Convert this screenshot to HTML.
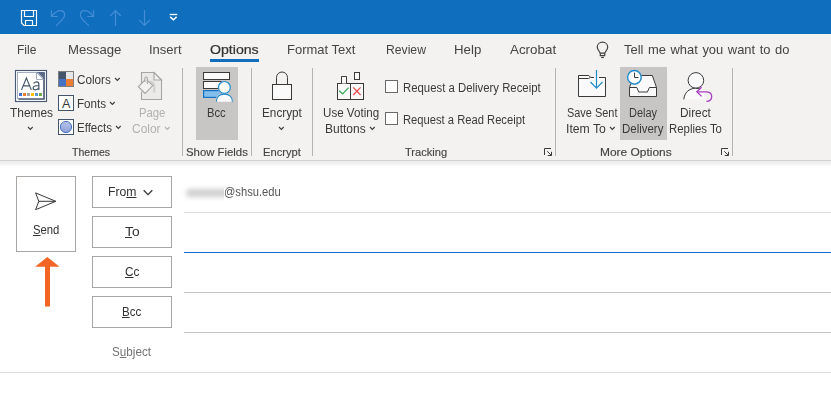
<!DOCTYPE html>
<html lang="en">
<head>
<meta charset="utf-8">
<title>Untitled - Message (HTML)</title>
<style>
  html, body { margin: 0; padding: 0; }
  body {
    width: 831px; height: 415px; overflow: hidden; position: relative;
    background: #ffffff;
    font-family: "Liberation Sans", sans-serif;
  }
  .a { position: absolute; display: block; overflow: visible; }
  .t {
    position: absolute; white-space: nowrap; transform-origin: 0 0;
    font-family: "Liberation Sans", sans-serif; font-weight: 400;
  }
  .t u { text-decoration: underline; text-decoration-thickness: 1px; text-underline-offset: 0.5px; }

  /* ---------- title bar ---------- */
  #titlebar { left: 0; top: 0; width: 831px; height: 34px; background: #106ebe; }

  /* ---------- ribbon ---------- */
  #ribbon { left: 0; top: 34px; width: 831px; height: 126px; background: #f3f2f1; }
  #ribbon-edge { left: 0; top: 160px; width: 831px; height: 1px; background: #d2d0ce; }
  #ribbon-shadow { left: 0; top: 161px; width: 831px; height: 6px;
    background: linear-gradient(to bottom, #e9e9e9 0%, #ffffff 100%); }
  #tab-underline { left: 210px; top: 59px; width: 49px; height: 3px; background: #106ebe; }
  .sep { width: 1px; top: 68px; height: 88px; background: #b5b2af; }
  .hl { background: #c8c6c4; }
  .cb { width: 11px; height: 11px; border: 1px solid #6b6967; background: #ffffff; }

  /* ---------- compose ---------- */
  .btn { border: 1px solid #a8a5a2; background: #ffffff; box-sizing: border-box; }
  .line { height: 1px; left: 184px; width: 647px; }
</style>
</head>
<body>

<!-- ================= TITLE BAR ================= -->
<div id="titlebar" class="a"></div>
<svg class="a" style="left:0;top:0" width="200" height="34" viewBox="0 0 200 34" fill="none">
  <!-- save -->
  <g stroke="#ffffff" stroke-width="1.15">
    <path d="M21.5,10.5 H36.5 V25.5 H24 L21.5,23 Z"/>
    <path d="M24.5,10.5 V16.5 H33.5 V10.5"/>
    <path d="M25.5,25.5 V20.5 H32.5 V25.5"/>
  </g>
  <!-- undo / redo / up / down (disabled) -->
  <g stroke="#448dd7" stroke-width="1.2" stroke-linecap="butt">
    <path d="M51.5,10.3 V16.5 H57.7"/>
    <path d="M51.8,16.2 C54.5,12.6 57.6,10.6 60.3,10.6 C63,10.6 64.6,12.6 64.6,15 C64.6,18.3 61.5,20.6 56.2,25.8"/>
    <path d="M93.5,10.3 V16.5 H87.3"/>
    <path d="M93.2,16.2 C90.5,12.6 87.4,10.6 84.7,10.6 C82,10.6 80.4,12.6 80.4,15 C80.4,18.3 83.5,20.6 88.8,25.8"/>
    <path d="M115.5,26 V10.8 M110.2,16 L115.5,10.7 L120.8,16"/>
    <path d="M144.5,10 V25.2 M139.2,20 L144.5,25.3 L149.8,20"/>
  </g>
  <!-- customize QAT -->
  <g stroke="#ffffff" stroke-width="1.3">
    <path d="M169.7,14.5 H177.3"/>
    <path d="M170.2,16.9 L173.4,19.8 L176.6,16.9" stroke-width="1.5"/>
  </g>
</svg>

<!-- ================= RIBBON ================= -->
<div id="ribbon" class="a"></div>
<div id="ribbon-edge" class="a"></div>
<div id="ribbon-shadow" class="a"></div>
<div id="tab-underline" class="a"></div>

<!-- lightbulb -->
<svg class="a" style="left:594px;top:40px" width="18" height="20" viewBox="594 40 18 20" fill="none" stroke="#404040" stroke-width="1.2">
  <path d="M600.3,53.2 L598.2,49.8 C597.6,48.8 597.3,47.9 597.3,47 C597.3,44.3 599.6,42.2 602.5,42.2 C605.4,42.2 607.7,44.3 607.7,47 C607.7,47.9 607.4,48.8 606.8,49.8 L604.7,53.2 Z"/>
  <path d="M600.3,53.2 V55.6 H604.7 V53.2"/>
  <path d="M601.2,57.5 H603.9"/>
</svg>

<!-- button highlights -->
<div class="a hl" style="left:196px;top:67px;width:42px;height:73px"></div>
<div class="a hl" style="left:620px;top:67px;width:47px;height:73px"></div>

<!-- group separators -->
<div class="a sep" style="left:182px"></div>
<div class="a sep" style="left:251px"></div>
<div class="a sep" style="left:312px"></div>
<div class="a sep" style="left:555px"></div>
<div class="a sep" style="left:732px"></div>

<!-- checkboxes -->
<div class="a cb" style="left:385px;top:80px"></div>
<div class="a cb" style="left:385px;top:112px"></div>

<!-- ribbon icons -->
<svg class="a" style="left:0;top:64px" width="831" height="96" viewBox="0 64 831 96" fill="none">
  <!-- Themes (32x32 at 15,70) -->
  <rect x="15.5" y="70.5" width="31" height="31" fill="#ffffff" stroke="#4a5a75" stroke-width="1.15"/>
  <rect x="17.5" y="72.5" width="26" height="26" fill="#ffffff" stroke="#a3adc0" stroke-width="1"/>
  <path d="M44.1,73 V99.1 H18.4" stroke="#44546a" stroke-width="1.4"/>
  <path d="M37,72 H44.8 V79.8 Z" fill="#5b6b86"/>
  <path d="M36.5,72.5 V79.5 H43.5 Z" fill="#ffffff" stroke="#8d98ad" stroke-width="0.8"/>
  <g stroke="#44546a" stroke-width="1.15" stroke-linejoin="miter">
    <path d="M21.5,89.9 L26.4,78.1 L31.3,89.9 M23.2,85.9 H29.6"/>
    <path d="M33.5,83.3 C34.5,82.3 35.7,81.9 36.8,81.9 C38.3,81.9 38.9,82.9 38.9,84.4 V89.9 M38.9,85.5 C35.8,85.6 33.1,86 33.1,88 C33.1,89.3 34.1,89.9 35.3,89.9 C36.9,89.9 38.3,88.9 38.9,87.6"/>
  </g>
  <rect x="19" y="93" width="3" height="3" fill="#4472c4"/>
  <rect x="23" y="93" width="3" height="3" fill="#ed7d31"/>
  <rect x="27" y="93" width="3" height="3" fill="#a5a5a5"/>
  <rect x="31" y="93" width="3" height="3" fill="#ffc000"/>
  <rect x="35" y="93" width="3" height="3" fill="#5b9bd5"/>
  <rect x="39" y="93" width="3" height="3" fill="#70ad47"/>

  <!-- Colors (16x16 at 58,71) -->
  <rect x="58" y="71" width="8" height="8" fill="#44546a"/>
  <rect x="66" y="71" width="8" height="8" fill="#e7e6e6"/>
  <rect x="58" y="79" width="8" height="8" fill="#4472c4"/>
  <rect x="66" y="79" width="8" height="8" fill="#ed7d31"/>
  <rect x="58.5" y="71.5" width="15" height="15" stroke="#7f7f7f" stroke-width="1"/>

  <!-- Fonts (16x16 at 58,95) -->
  <rect x="58.5" y="95.5" width="15" height="15" fill="#ffffff" stroke="#44546a" stroke-width="1"/>
  <text x="61.9" y="107.8" font-family="Liberation Sans, sans-serif" font-size="12" fill="#3b3a39" textLength="8.4" lengthAdjust="spacingAndGlyphs">A</text>

  <!-- Effects (16x16 at 58,119) -->
  <defs>
    <linearGradient id="fx" x1="0" y1="0" x2="0" y2="1">
      <stop offset="0" stop-color="#b9c4ea"/><stop offset="1" stop-color="#8c9fd8"/>
    </linearGradient>
  </defs>
  <rect x="58.5" y="119.5" width="15" height="15" fill="#ffffff" stroke="#44546a" stroke-width="1"/>
  <circle cx="66" cy="127" r="5.6" fill="url(#fx)" stroke="#4472c4" stroke-width="1"/>

  <!-- Page Color (disabled) -->
  <g stroke="#a7a5a3" stroke-width="1.1" stroke-linejoin="miter">
    <path d="M141.5,83 V72.5 H154 L161.5,80 V99.5 H141.5 V91.5" fill="#ebeae9"/>
    <path d="M154,72.5 V80 H161.5 Z" fill="#f3f2f1"/>
  </g>
  <path d="M150,81.6 C153,82 154.3,84 154.3,87 V92.5" stroke="#d2d0ce" stroke-width="2.1"/>
  <g stroke="#a7a5a3" stroke-width="1.1">
    <path d="M138.4,86.7 L146,79 L152.8,85.6 L145.1,93.4 Z" fill="#f3f2f1"/>
    <path d="M144.9,82 V78.3 C144.9,76.6 147.3,76.6 147.3,78.3 V84" fill="#f3f2f1"/>
  </g>

  <!-- Bcc -->
  <rect x="203.5" y="72.5" width="26" height="7" fill="#fafafa" stroke="#3b3a39" stroke-width="1"/>
  <rect x="203.5" y="81.5" width="18" height="7" fill="#fafafa" stroke="#3b3a39" stroke-width="1"/>
  <rect x="203.6" y="90.6" width="18" height="6.8" fill="#83beec" stroke="#1272c4" stroke-width="1.2"/>
  <path d="M216.4,101.8 C216.4,97 219.6,94.2 224.4,94.2 C229.2,94.2 232.4,97 232.4,101.8 Z" fill="#fafafa" stroke="#c8c6c4" stroke-width="2.6"/>
  <path d="M216.4,101.8 C216.4,97 219.6,94.2 224.4,94.2 C229.2,94.2 232.4,97 232.4,101.8" fill="#fafafa" stroke="#1e8bcd" stroke-width="1.2"/>
  <circle cx="224.4" cy="87.4" r="6.7" fill="#c8c6c4"/>
  <circle cx="224.4" cy="87.4" r="5.9" fill="#fafafa" stroke="#1e8bcd" stroke-width="1.2"/>

  <!-- Encrypt (padlock) -->
  <path d="M276.5,84.5 V77.5 A5.5,5.5 0 0 1 287.5,77.5 V84.5" stroke="#3b3a39" stroke-width="1"/>
  <rect x="272.5" y="84.5" width="19" height="15" fill="#fafafa" stroke="#3b3a39" stroke-width="1"/>

  <!-- Voting buttons -->
  <rect x="337.5" y="83.5" width="26" height="16" fill="#fafafa" stroke="#3b3a39" stroke-width="1"/>
  <path d="M350.5,83.5 V99.5" stroke="#3b3a39" stroke-width="1"/>
  <path d="M341.5,83.5 V76.5 H346.5 V83.5" fill="#fafafa" stroke="#3b3a39" stroke-width="1"/>
  <rect x="354.5" y="72.5" width="5" height="7" fill="#fafafa" stroke="#3b3a39" stroke-width="1"/>
  <path d="M339.2,90.7 L342.6,93.8 L348.6,87.6" stroke="#33a852" stroke-width="1.2"/>
  <path d="M353.2,87.4 L360.6,95 M360.6,87.4 L353.2,95" stroke="#e8484a" stroke-width="1.2"/>

  <!-- Tracking dialog launcher -->
  <g stroke="#3b3a39" stroke-width="1">
    <path d="M544.5,155 V148.5 H551"/>
    <path d="M547.3,151.3 L551.3,155.3"/>
    <path d="M547.8,155.5 H551.5 V151.8"/>
  </g>

  <!-- Save Sent Item To -->
  <path d="M578.5,96.5 V75.5 H588.8 L590.8,77.5 H605.5 V96.5 Z" fill="#fafafa" stroke="#3b3a39" stroke-width="1"/>
  <path d="M578.5,78.5 H588.4 L590.4,77.5" stroke="#3b3a39" stroke-width="1"/>
  <rect x="594" y="76" width="5" height="3" fill="#fafafa"/>
  <path d="M596.5,70 V88 M590.5,82 L596.5,88.2 L602.5,82" stroke="#1e8bcd" stroke-width="1.2"/>

  <!-- Delay Delivery -->
  <path d="M629.5,87.5 L633.7,75.5 H652.3 L656.5,87.5 V96.5 H629.5 Z" fill="#fafafa" stroke="#3b3a39" stroke-width="1"/>
  <path d="M629.5,87.5 H636.8 L638.8,92 H647.4 L649.4,87.5 H656.5" stroke="#3b3a39" stroke-width="1"/>
  <circle cx="634.4" cy="77.3" r="7.6" fill="#c8c6c4"/>
  <circle cx="634.4" cy="77.3" r="6.8" fill="#fafafa" stroke="#1e8bcd" stroke-width="1.4"/>
  <path d="M634.5,72.6 V77.5 H638.4" stroke="#3b3a39" stroke-width="1"/>

  <!-- Direct Replies To -->
  <circle cx="695.9" cy="80.4" r="7.8" fill="#fafafa" stroke="#3b3a39" stroke-width="1"/>
  <path d="M683.8,99.4 C684.4,92.6 689,88.3 695.6,88.3 C699,88.3 701.6,89.2 703.6,90.6 L706,99.4 Z" fill="#fafafa"/>
  <path d="M683.8,99.4 C684.4,92.6 689,88.3 695.6,88.3 C697.4,88.3 699,88.6 700.3,89" stroke="#3b3a39" stroke-width="1"/>
  <path d="M701.6,87.2 L696.8,91.8 L701.6,96.4" stroke="#a93fc4" stroke-width="1.3"/>
  <path d="M697,91.8 H705.8 C709.6,91.8 711.7,93.8 711.7,96.4 C711.7,99.2 709.6,101.2 706.4,101.4" stroke="#a93fc4" stroke-width="1.3"/>

  <!-- More Options dialog launcher -->
  <g stroke="#3b3a39" stroke-width="1">
    <path d="M721.5,155 V148.5 H728"/>
    <path d="M724.3,151.3 L728.3,155.3"/>
    <path d="M724.8,155.5 H728.5 V151.8"/>
  </g>
</svg>

<svg class="a" style="left:27.15px;top:126.40px" width="6.70" height="4.35"><polyline points="1,1 3.35,3.35 5.70,1" fill="none" stroke="#3b3a39" stroke-width="1.1"/></svg>
<svg class="a" style="left:114.40px;top:77.40px" width="6.70" height="4.35"><polyline points="1,1 3.35,3.35 5.70,1" fill="none" stroke="#3b3a39" stroke-width="1.1"/></svg>
<svg class="a" style="left:109.40px;top:101.40px" width="6.70" height="4.35"><polyline points="1,1 3.35,3.35 5.70,1" fill="none" stroke="#3b3a39" stroke-width="1.1"/></svg>
<svg class="a" style="left:115.20px;top:125.40px" width="6.70" height="4.35"><polyline points="1,1 3.35,3.35 5.70,1" fill="none" stroke="#3b3a39" stroke-width="1.1"/></svg>
<svg class="a" style="left:164.25px;top:126.40px" width="6.70" height="4.35"><polyline points="1,1 3.35,3.35 5.70,1" fill="none" stroke="#b3b0ad" stroke-width="1.1"/></svg>
<svg class="a" style="left:277.95px;top:126.40px" width="6.70" height="4.35"><polyline points="1,1 3.35,3.35 5.70,1" fill="none" stroke="#3b3a39" stroke-width="1.1"/></svg>
<svg class="a" style="left:369.40px;top:126.40px" width="6.70" height="4.35"><polyline points="1,1 3.35,3.35 5.70,1" fill="none" stroke="#3b3a39" stroke-width="1.1"/></svg>
<svg class="a" style="left:609.25px;top:126.40px" width="6.70" height="4.35"><polyline points="1,1 3.35,3.35 5.70,1" fill="none" stroke="#3b3a39" stroke-width="1.1"/></svg>

<!-- ================= COMPOSE HEADER ================= -->
<div class="a btn" style="left:16px;top:176px;width:60px;height:76px"></div>
<div class="a btn" style="left:92px;top:176px;width:80px;height:32px"></div>
<div class="a btn" style="left:92px;top:216px;width:80px;height:32px"></div>
<div class="a btn" style="left:92px;top:256px;width:80px;height:32px"></div>
<div class="a btn" style="left:92px;top:296px;width:80px;height:32px"></div>

<!-- send glyph, From chevron, annotation arrow -->
<svg class="a" style="left:0;top:170px" width="200" height="150" viewBox="0 170 200 150" fill="none">
  <path d="M35.6,192.9 L55.8,201.3 L35.6,209.7 L38.8,201.3 Z" fill="#fafafa" stroke="#3b3a39" stroke-width="1" stroke-linejoin="miter"/>
  <path d="M38.8,201.3 H55.8" stroke="#3b3a39" stroke-width="1"/>
  <path d="M143.7,190.2 L148,194.6 L152.3,190.2" stroke="#3b3a39" stroke-width="1.35"/>
  <path d="M47.3,257.1 L59.5,266.7 H50 V306.6 H45 V266.7 H35.2 Z" fill="#f26522"/>
</svg>

<!-- blurred sender name -->
<div class="a" style="left:178px;top:182px;width:46.4px;height:22px;overflow:hidden">
  <div class="a" style="left:8px;top:6.5px;width:50px;height:8px;background:#d0d0d0;border-radius:4px;filter:blur(2.8px)"></div>
</div>

<!-- field underlines -->
<div class="a line" style="top:212px;background:#e1dfdd"></div>
<div class="a line" style="top:252px;background:#1173d6"></div>
<div class="a line" style="top:292px;background:#c8c6c4"></div>
<div class="a line" style="top:332px;background:#c8c6c4"></div>
<div class="a" style="left:0;top:372px;width:831px;height:1px;background:#e1dfdd"></div>

<span class="t" style="left:16.99px;top:43.00px;font-size:13px;line-height:13px;color:#444444;transform:scaleX(0.9241);">File</span>
<span class="t" style="left:67.69px;top:43.00px;font-size:13px;line-height:13px;color:#444444;transform:scaleX(1.0113);">Message</span>
<span class="t" style="left:148.59px;top:43.00px;font-size:13px;line-height:13px;color:#444444;transform:scaleX(0.9999);">Insert</span>
<span class="t" style="left:209.90px;top:43.00px;font-size:13px;line-height:13px;color:#333333;transform:scaleX(1.0865);-webkit-text-stroke:0.22px #333333;">Options</span>
<span class="t" style="left:286.89px;top:43.00px;font-size:13px;line-height:13px;color:#444444;transform:scaleX(0.9987);">Format Text</span>
<span class="t" style="left:385.98px;top:43.00px;font-size:13px;line-height:13px;color:#444444;transform:scaleX(0.9367);">Review</span>
<span class="t" style="left:454.12px;top:43.00px;font-size:13px;line-height:13px;color:#444444;transform:scaleX(1.0199);">Help</span>
<span class="t" style="left:510.09px;top:43.00px;font-size:13px;line-height:13px;color:#444444;transform:scaleX(1.0288);">Acrobat</span>
<span class="t" style="left:624.17px;top:43.00px;font-size:13px;line-height:13px;color:#444444;transform:scaleX(0.9940);word-spacing:1.0px;">Tell me what you want to do</span>
<span class="t" style="left:9.92px;top:107.00px;font-size:12px;line-height:12px;color:#3b3a39;transform:scaleX(0.9938);">Themes</span>
<span class="t" style="left:77.27px;top:74.00px;font-size:12px;line-height:12px;color:#3b3a39;transform:scaleX(0.9732);">Colors</span>
<span class="t" style="left:76.83px;top:98.00px;font-size:12px;line-height:12px;color:#3b3a39;transform:scaleX(0.9703);">Fonts</span>
<span class="t" style="left:76.86px;top:122.00px;font-size:12px;line-height:12px;color:#3b3a39;transform:scaleX(0.9591);">Effects</span>
<span class="t" style="left:139.19px;top:107.00px;font-size:12px;line-height:12px;color:#b3b0ad;transform:scaleX(0.9406);">Page</span>
<span class="t" style="left:132.24px;top:123.00px;font-size:12px;line-height:12px;color:#b3b0ad;transform:scaleX(0.9955);">Color</span>
<span class="t" style="left:71.80px;top:146.50px;font-size:11px;line-height:11px;color:#444444;transform:scaleX(0.9590);-webkit-text-stroke:0.15px #444444;">Themes</span>
<span class="t" style="left:207.45px;top:107.00px;font-size:12px;line-height:12px;color:#3b3a39;transform:scaleX(0.9305);">Bcc</span>
<span class="t" style="left:185.97px;top:146.50px;font-size:11px;line-height:11px;color:#444444;transform:scaleX(1.0324);-webkit-text-stroke:0.15px #444444;">Show Fields</span>
<span class="t" style="left:261.91px;top:107.00px;font-size:12px;line-height:12px;color:#3b3a39;transform:scaleX(0.9804);">Encrypt</span>
<span class="t" style="left:263.00px;top:146.50px;font-size:11px;line-height:11px;color:#444444;transform:scaleX(1.0145);-webkit-text-stroke:0.15px #444444;">Encrypt</span>
<span class="t" style="left:323.46px;top:107.00px;font-size:12px;line-height:12px;color:#3b3a39;transform:scaleX(0.9668);">Use Voting</span>
<span class="t" style="left:325.01px;top:123.00px;font-size:12px;line-height:12px;color:#3b3a39;transform:scaleX(0.9999);">Buttons</span>
<span class="t" style="left:403.43px;top:82.00px;font-size:12px;line-height:12px;color:#3b3a39;transform:scaleX(0.9468);">Request a Delivery Receipt</span>
<span class="t" style="left:403.45px;top:114.00px;font-size:12px;line-height:12px;color:#3b3a39;transform:scaleX(0.9333);">Request a Read Receipt</span>
<span class="t" style="left:405.23px;top:146.50px;font-size:11px;line-height:11px;color:#444444;transform:scaleX(1.0096);-webkit-text-stroke:0.15px #444444;">Tracking</span>
<span class="t" style="left:567.11px;top:107.00px;font-size:12px;line-height:12px;color:#3b3a39;transform:scaleX(0.9106);">Save Sent</span>
<span class="t" style="left:565.78px;top:123.00px;font-size:12px;line-height:12px;color:#3b3a39;transform:scaleX(1.0188);">Item To</span>
<span class="t" style="left:629.17px;top:107.00px;font-size:12px;line-height:12px;color:#3b3a39;transform:scaleX(0.9153);">Delay</span>
<span class="t" style="left:622.48px;top:123.00px;font-size:12px;line-height:12px;color:#3b3a39;transform:scaleX(0.9546);">Delivery</span>
<span class="t" style="left:680.49px;top:107.00px;font-size:12px;line-height:12px;color:#3b3a39;transform:scaleX(0.9849);">Direct</span>
<span class="t" style="left:668.82px;top:123.00px;font-size:12px;line-height:12px;color:#3b3a39;transform:scaleX(0.9486);">Replies To</span>
<span class="t" style="left:599.86px;top:146.50px;font-size:11px;line-height:11px;color:#444444;transform:scaleX(1.0864);-webkit-text-stroke:0.15px #444444;">More Options</span>
<span class="t" style="left:32.64px;top:224.00px;font-size:12px;line-height:12px;color:#323130;transform:scaleX(0.9404);"><u>S</u>end</span>
<span class="t" style="left:107.84px;top:186.00px;font-size:12px;line-height:12px;color:#323130;transform:scaleX(1.0165);">Fro<u>m</u></span>
<span class="t" style="left:125.46px;top:226.00px;font-size:12px;line-height:12px;color:#323130;transform:scaleX(1.1503);"><u>T</u>o</span>
<span class="t" style="left:125.28px;top:266.00px;font-size:12px;line-height:12px;color:#323130;transform:scaleX(0.9800);"><u>C</u>c</span>
<span class="t" style="left:121.74px;top:306.00px;font-size:12px;line-height:12px;color:#323130;transform:scaleX(0.9581);"><u>B</u>cc</span>
<span class="t" style="left:112.18px;top:346.00px;font-size:12px;line-height:12px;color:#757371;transform:scaleX(0.9728);">S<u>u</u>bject</span>
<span class="t" style="left:224.45px;top:186.00px;font-size:12px;line-height:12px;color:#555555;transform:scaleX(0.9319);">@shsu.edu</span>

</body>
</html>
